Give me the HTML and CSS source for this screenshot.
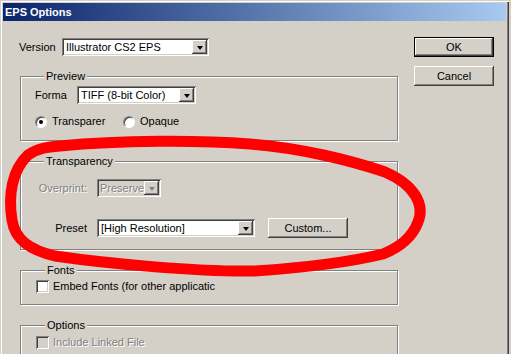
FILE: index.html
```html
<!DOCTYPE html>
<html>
<head>
<meta charset="utf-8">
<title>EPS Options</title>
<link rel="stylesheet" href="styles.css">
</head>
<body>
<div class="window">
  <div class="titlebar">EPS Options</div>
  <div class="content">
    <div class="main">
      <div class="row version-row">
        <span class="label version-label">Version</span>
        <div class="combo combo-version">
          <span class="combo-text">Illustrator CS2 EPS</span>
          <span class="drop"><span class="arrow"></span></span>
        </div>
      </div>

      <fieldset class="group group-preview">
        <legend>Preview</legend>
        <div class="row">
          <span class="label forma-label">Forma</span>
          <div class="combo combo-format">
            <span class="combo-text">TIFF (8-bit Color)</span>
            <span class="drop"><span class="arrow"></span></span>
          </div>
        </div>
        <div class="row radio-row">
          <span class="radio checked"></span>
          <span class="radio-text radio-text-1">Transparer</span>
          <span class="radio"></span>
          <span class="radio-text">Opaque</span>
        </div>
      </fieldset>

      <fieldset class="group group-transparency">
        <legend>Transparency</legend>
        <div class="row">
          <span class="label rlabel disabled">Overprint:</span>
          <div class="combo combo-disabled">
            <span class="combo-text disabled">Preserve</span>
            <span class="drop"><span class="arrow arrow-disabled"></span></span>
          </div>
        </div>
        <div class="row preset-row">
          <span class="label rlabel">Preset</span>
          <div class="combo combo-preset">
            <span class="combo-text">[High Resolution]</span>
            <span class="drop"><span class="arrow"></span></span>
          </div>
          <div class="button custom">Custom...</div>
        </div>
      </fieldset>

      <fieldset class="group group-fonts">
        <legend>Fonts</legend>
        <div class="row check-row">
          <span class="check"></span>
          <span class="check-text">Embed Fonts (for other applicatic</span>
        </div>
      </fieldset>

      <fieldset class="group group-options">
        <legend>Options</legend>
        <div class="row check-row">
          <span class="check check-disabled"></span>
          <span class="check-text disabled">Include Linked File</span>
        </div>
      </fieldset>
    </div>

    <div class="buttons">
      <div class="button default">OK</div>
      <div class="button">Cancel</div>
    </div>
  </div>

  <svg class="scribble" width="511" height="354" viewBox="0 0 511 354">
    <path d="M 60 146 C 120 140, 200 140, 250 144 C 300 148, 350 160, 385 172 C 415 185, 425 205, 418 222 C 412 238, 400 247, 383 254 C 350 262, 300 268, 255 271 C 200 272, 110 264, 55 256 C 30 250, 15 240, 12 220 C 8 195, 12 170, 28 155 C 38 148, 48 147, 60 146 Z" fill="none" stroke="#ff0000" stroke-width="11" stroke-linecap="round" stroke-linejoin="round"/>
  </svg>
</div>
</body>
</html>
```

FILE: styles.css
```css
html, body {
  margin: 0;
  padding: 0;
  background: #d4d0c8;
  overflow: hidden;
}

body {
  font-family: "Liberation Sans", Arial, sans-serif;
  font-size: 11px;
  color: #000;
}

.window {
  position: relative;
  width: 509px;
  height: 354px;
  overflow: hidden;
  padding: 3px;
  box-sizing: border-box;
  background: #d4d0c8;
  box-shadow: inset 1px 1px 0 #d4d0c8, inset 2px 2px 0 #fff, inset -1px 0 0 #404040, inset -2px 0 0 #808080;
}

.titlebar {
  height: 18px;
  line-height: 18px;
  padding-left: 2px;
  color: #fff;
  font-weight: bold;
  background: linear-gradient(to right, #0a246a, #a6caf0);
}

.content {
  display: flex;
  align-items: flex-start;
}

.main {
  width: 379px;
  padding-left: 16px;
}

.row {
  display: flex;
  align-items: center;
}

.version-row {
  margin-top: 17px;
  height: 18px;
}

.version-label {
  width: 43px;
}

.label {
  white-space: nowrap;
  line-height: 13px;
}

.combo {
  display: flex;
  align-items: stretch;
  height: 18px;
  box-sizing: border-box;
  padding: 2px;
  background: #fff;
  box-shadow: inset 1px 1px 0 #808080, inset -1px -1px 0 #fff, inset 2px 2px 0 #404040, inset -2px -2px 0 #d4d0c8;
}

.combo-text {
  flex: 1;
  padding-left: 2px;
  line-height: 14px;
  white-space: nowrap;
}

.drop {
  width: 15px;
  flex: none;
  display: flex;
  align-items: center;
  justify-content: center;
  background: #d4d0c8;
  box-shadow: inset -1px -1px 0 #404040, inset 1px 1px 0 #fff, inset -2px -2px 0 #808080;
}

.arrow {
  width: 0;
  height: 0;
  border-left: 3px solid transparent;
  border-right: 3px solid transparent;
  border-top: 4px solid #000;
  margin-top: 1px;
}

.arrow-disabled {
  border-top-color: #808080;
}

.combo-version {
  width: 147px;
}

/* group boxes */
.group {
  margin: 0 0 0 1px;
  padding: 0;
  width: 378px;
  box-sizing: border-box;
  border: 1px solid #808080;
  box-shadow: inset 1px 1px 0 #fff, 1px 1px 0 #fff;
  min-inline-size: 0;
}

.group legend {
  margin-left: 9px;
  padding: 0 2px;
  line-height: 13px;
  background: #d4d0c8;
}

.group-preview {
  margin-top: 14px;
  height: 71px;
  padding: 3px 0 0 14px;
}

.forma-label {
  width: 42px;
}

.combo-format {
  width: 119px;
}

.radio-row {
  margin-top: 11px;
  height: 13px;
}

.radio {
  width: 12px;
  height: 12px;
  flex: none;
  box-sizing: border-box;
  border-radius: 50%;
  background: #fff;
  border: 1px solid;
  border-color: #808080 #fff #fff #808080;
  box-shadow: inset 1px 1px 0 #404040;
  position: relative;
}

.radio.checked::after {
  content: "";
  position: absolute;
  left: 3px;
  top: 3px;
  width: 4px;
  height: 4px;
  border-radius: 50%;
  background: #000;
}

.radio-text {
  margin-left: 5px;
  line-height: 13px;
  white-space: nowrap;
}

.radio-text-1 {
  width: 58px;
  margin-right: 13px;
}

.group-transparency {
  margin-top: 14px;
  height: 95px;
  padding: 11px 0 0 14px;
}

.rlabel {
  width: 52px;
  text-align: right;
  margin-right: 10px;
}

.disabled {
  color: #808080;
  text-shadow: 1px 1px 0 #fff;
}

.combo-disabled {
  width: 64px;
  background: #d4d0c8;
}

.combo-disabled .combo-text {
  padding-left: 1px;
}

.preset-row {
  margin-top: 21px;
  height: 20px;
}

.combo-preset {
  width: 158px;
}

.button {
  display: flex;
  align-items: center;
  justify-content: center;
  width: 80px;
  height: 20px;
  box-sizing: border-box;
  background: #d4d0c8;
  box-shadow: inset -1px -1px 0 #404040, inset 1px 1px 0 #fff, inset -2px -2px 0 #808080;
  line-height: 13px;
}

.custom {
  margin-left: 13px;
}

.group-fonts {
  margin-top: 14px;
  height: 41px;
  padding: 3px 0 0 15px;
}

.check-row {
  height: 13px;
}

.check {
  width: 13px;
  height: 13px;
  flex: none;
  box-sizing: border-box;
  background: #fff;
  box-shadow: inset 1px 1px 0 #808080, inset -1px -1px 0 #fff, inset 2px 2px 0 #404040, inset -2px -2px 0 #d4d0c8;
}

.check-disabled {
  background: #d4d0c8;
}

.check-text {
  margin-left: 4px;
  white-space: nowrap;
  line-height: 13px;
}

.group-options {
  margin-top: 14px;
  height: 60px;
  padding: 4px 0 0 15px;
}

.buttons {
  margin-left: 16px;
  margin-top: 16px;
  display: flex;
  flex-direction: column;
  gap: 9px;
}

.button.default {
  border: 1px solid #000;
  box-shadow: inset -1px -1px 0 #404040, inset 1px 1px 0 #fff, inset -2px -2px 0 #808080;
}

.scribble {
  position: absolute;
  left: 0;
  top: 0;
  pointer-events: none;
}
```
